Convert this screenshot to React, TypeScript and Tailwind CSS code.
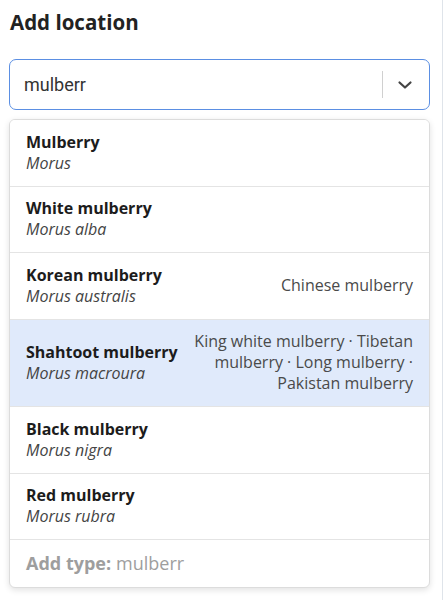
import React from "react";

type Item = { name: string; sci: string; alt?: string; active?: boolean };

const items: Item[] = [
  { name: "Mulberry", sci: "Morus" },
  { name: "White mulberry", sci: "Morus alba" },
  { name: "Korean mulberry", sci: "Morus australis", alt: "Chinese mulberry" },
  {
    name: "Shahtoot mulberry",
    sci: "Morus macroura",
    alt: "King white mulberry · Tibetan mulberry · Long mulberry · Pakistan mulberry",
    active: true,
  },
  { name: "Black mulberry", sci: "Morus nigra" },
  { name: "Red mulberry", sci: "Morus rubra" },
];

export default function App() {
  return (
    <div
      className="w-[444px] h-[600px] bg-white flex"
      style={{ fontFamily: '"Open Sans", "Noto Sans", sans-serif' }}
    >
      <div className="w-[443px] h-full border-r border-[#dfe4ea] pl-[9px] pr-[12px] pt-[8px]">
        <h1 className="text-[20.5px] leading-[28px] font-bold text-[#222] pl-[1px]">Add location</h1>
        <div className="mt-[23px] h-[51px] rounded-[7px] border-[1.5px] border-[#5b8fe3] flex items-center pl-[14px] pr-[10px]">
          <span
            className="flex-1 text-[18px] text-[#333]"
            style={{ fontFamily: 'Roboto, "Open Sans", sans-serif' }}
          >
            mulberr
          </span>
          <div className="w-px h-[27px] bg-[#d0d0d0] mr-[14px]" />
          <svg width="16" height="16" viewBox="0 0 16 16" className="mr-[6px]">
            <path d="M2.5 5.5 L8 10.5 L13.5 5.5" fill="none" stroke="#444" strokeWidth="2.2" strokeLinecap="round" strokeLinejoin="round" />
          </svg>
        </div>
        <div className="mt-[9px] rounded-[6px] border border-[#dcdcdc] bg-white shadow-[0_2px_6px_rgba(0,0,0,0.12)] overflow-hidden">
          {items.map((it, i) => (
            <div
              key={i}
              className={`flex items-center justify-between gap-3 px-[16px] py-[11.75px] border-b border-[#e4e4e4] ${
                it.active ? "bg-[#e0eafb]" : "bg-white"
              }`}
            >
              <div className="flex flex-col shrink-0">
                <span className="text-[16px] leading-[21px] font-bold text-[#1c1c1c]">{it.name}</span>
                <span className="text-[16px] leading-[21px] italic text-[#444]">{it.sci}</span>
              </div>
              {it.alt && (
                <div className="text-[16px] leading-[21px] text-[#4a4a4a] text-right max-w-[226px]">{it.alt}</div>
              )}
            </div>
          ))}
          <div className="h-[47px] flex items-center px-[16px] text-[18px] text-[#9e9e9e]">
            <span className="font-bold">Add type:</span>
            <span className="ml-[5px]">mulberr</span>
          </div>
        </div>
      </div>
    </div>
  );
}
